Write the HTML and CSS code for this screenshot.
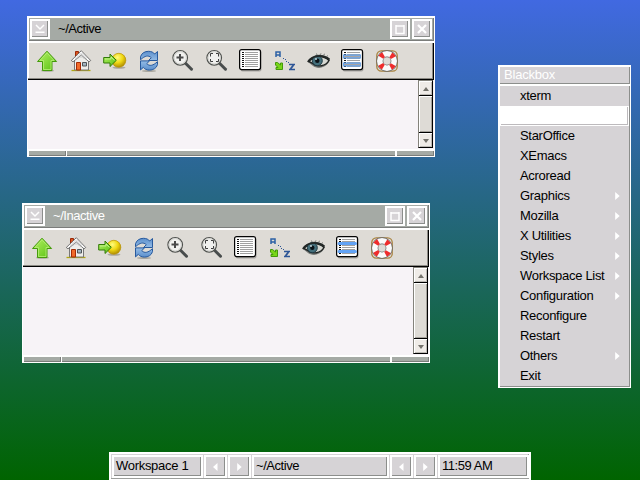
FILE: index.html
```
<!DOCTYPE html>
<html lang="en">
<head>
<meta charset="utf-8">
<title>Blackbox desktop</title>
<link rel="stylesheet" href="styles.css">
</head>
<body>
<svg class="defs" width="0" height="0">
<defs>
<linearGradient id="green" x2="1" y2="1"><stop offset="0" stop-color="#b5f266"/><stop offset="1" stop-color="#58c010"/></linearGradient>
<radialGradient id="gold" cx=".4" cy=".3" r=".75"><stop offset="0" stop-color="#fffb80"/><stop offset=".5" stop-color="#f0d814"/><stop offset="1" stop-color="#a88400"/></radialGradient>
<linearGradient id="blue" x2="0" y2="1"><stop offset="0" stop-color="#5c8fcc"/><stop offset="1" stop-color="#94bce6"/></linearGradient>
<symbol id="i-up" viewBox="0 0 24 24"><ellipse cx="12.5" cy="21.7" rx="6.5" ry="1" fill="#aaa79f"/><path d="M12 2.2 21.6 12.5H17V21.5H7.5V12.5H2.5Z" fill="url(#green)" stroke="#449a0b"/><path d="M12 3.8 19 11.5H16V20.5H8.5V11.5H5Z" fill="none" stroke="#b8ef78" stroke-width=".8"/></symbol>
<symbol id="i-home" viewBox="0 0 24 24"><path d="M2.5 21.5H21.5" stroke="#b2a812" stroke-width="1.3"/><path d="M6.500 2.500H9.500V8L6.500 10Z" fill="#d95520" stroke="#9c2806"/><path d="M5.500 10 12.300 4 19.500 10V21H5.500Z" fill="#eeeeeb" stroke="#777"/><path d="M12.300 1.700 21.700 11.500 20 12.800 12.300 6 4 12.800 2.300 11.500Z" fill="#fafafa" stroke="#555" stroke-width=".8"/><path d="M7 8V11M9 6V10M11 4V9M13 4V9M15 5V10M17 7V11" stroke="#bbb" stroke-width=".7"/><path d="M7.500 13.500H11.500V21H7.500Z" fill="#f06a2a" stroke="#a62c05"/><path d="M13.500 13.500H17.500V17H13.500Z" fill="#a2b4c0" stroke="#4f5558"/></symbol>
<symbol id="i-go" viewBox="0 0 24 24"><ellipse cx="16" cy="18.600" rx="6.500" ry="1.200" fill="#aaa79f"/><circle cx="15.800" cy="11.300" r="7" fill="url(#gold)" stroke="#b99000" stroke-width=".7"/><path d="M.7 8.500H7V5L13.300 11.300 7 17.500V14H.7Z" fill="url(#green)" stroke="#337b09"/><path d="M2 10H8V8L11.300 11.300" fill="none" stroke="#d3f6a6" stroke-width=".7"/></symbol>
<symbol id="i-reload" viewBox="0 0 24 24"><ellipse cx="12" cy="22" rx="7" ry="1" fill="#aaa79f"/><path id="arc" d="M3.500 7.800C4.500 4 8 2.300 11.500 2.300C14.500 2.300 16.500 3.500 17.700 5L20.500 2.500V11.500H11.500L14.300 8.700C11.500 6 8 6.500 3.500 10.800Z" fill="url(#blue)" stroke="#285a9e"/><use href="#arc" transform="rotate(180 12 11.700)"/></symbol>
<symbol id="i-lens" viewBox="0 0 24 24"><path d="M14.500 14.300 20.500 20.200" stroke="#484c4c" stroke-width="3" stroke-linecap="round"/><circle cx="9.200" cy="8.800" r="7.300" fill="#f1f1ef" stroke="#50524f" stroke-width="1.200"/><circle cx="9.200" cy="8.800" r="6.200" fill="none" stroke="#cfcfcb"/></symbol>
<symbol id="i-zoom" viewBox="0 0 24 24"><use href="#i-lens" width="24" height="24"/><path d="M9 5V12M5.500 8.500H12.500" stroke="#4a4a4a" stroke-width="2"/></symbol>
<symbol id="i-fit" viewBox="0 0 24 24"><use href="#i-lens" width="24" height="24"/><path d="M5.500 7.500V4.500H8M11 4.500H13.500V7.500M13.500 10V12.500H11M8 12.500H5.500V10" fill="none" stroke="#3f3f3f"/></symbol>
<symbol id="i-list" viewBox="0 0 24 24"><rect x="1.500" y="1.500" width="21" height="21" rx="2" fill="#aaa8a4"/><rect x=".6" y=".6" width="20.900" height="20" rx="2" fill="#fff" stroke="#050505" stroke-width="1.200"/><path d="M3 3.500H5M3 5.500H5M3 7.500H5M3 9.500H5M3 11.500H5M3 13.500H5M3 15.500H5M3 17.500H5" stroke="#111"/><path d="M6 3.500H19M6 5.500H19M6 7.500H19M6 9.500H19M6 11.500H19M6 13.500H19M6 15.500H19M6 17.500H19" stroke="#a0a0a0"/></symbol>
<symbol id="i-select" viewBox="0 0 24 24"><use href="#i-list" width="24" height="24"/><path d="M3 7.500H19.500M3 15.500H19.500" stroke="#62a3f5" stroke-width="3" stroke-linecap="round"/></symbol>
<symbol id="i-select-dim" viewBox="0 0 24 24"><use href="#i-list" width="24" height="24"/><path d="M2 7.500H20M2 15.500H20" stroke="#65a6f2" stroke-width="4"/><path d="M3 7.500H19.500M3 15.500H19.500" stroke="#aaa4a0" stroke-width="1.500"/></symbol>
<symbol id="i-sort" viewBox="0 0 24 24"><path d="M3 8V3H7V8M3 6H7" fill="none" stroke="#2d61a5" stroke-width="1.500"/><path d="M16 15.500H22M16 20.500H22" stroke="#2d5596" stroke-width="1.400"/><path d="M20.500 16 17.500 20" stroke="#2d5596" stroke-width="1.800"/><path d="M10 9.500h1M12 10.500h1M13 12.500h1M15 13.500h1" stroke="#2d5596"/><path d="M2.500 13.500H4.500L7.500 16V14H9.500V20.500H3V18.500H5L2.500 16Z" fill="#78d618" stroke="#43990b"/></symbol>
<symbol id="i-eye" viewBox="0 0 24 24"><path d="M.8 13C5 4.500 16 3.500 22.500 10C23 13 19 18.500 12 19C7 19 4 15 .8 13Z" fill="#777b78"/><path d="M2 12.500C6 6.500 16 6 22 11.500C19 17 10 19 5 14Z" fill="#d6d8d2" stroke="#202322" stroke-width="1.400"/><circle cx="10.300" cy="11.700" r="5" fill="#446f7b" stroke="#203b45"/><circle cx="10.300" cy="11.700" r="2.200" fill="#0b1318"/><circle cx="9" cy="9.900" r="1" fill="#c4d8df"/><path d="M.8 13C5 6 16 5 22.500 10.500" fill="none" stroke="#222726" stroke-width="1.700"/><path d="M10 6 9.500 4.500M13 6 14 4.300M16 6.500 18 4.800M19 8 21 6.500" stroke="#555a58" stroke-width=".7"/></symbol>
<symbol id="i-help" viewBox="0 0 24 24"><rect x="1.800" y="1.800" width="20.400" height="20.400" rx="4.500" fill="none" stroke="#a98442" stroke-width="1.300"/><circle cx="12" cy="12" r="7.200" fill="none" stroke="#666" stroke-width="7"/><circle cx="12" cy="12" r="7.200" fill="none" stroke="#fafafa" stroke-width="5.600"/><circle cx="12" cy="12" r="7.200" fill="none" stroke="#ef2d2d" stroke-width="5.600" stroke-dasharray="3.800 7.510" stroke-dashoffset="-3.755"/></symbol>
<symbol id="i-min" viewBox="0 0 16 16"><path d="M4 4 8 8 12 4M3.500 11.200H12.500" fill="none" stroke="#fff" stroke-width="1.500"/></symbol>
<symbol id="i-max" viewBox="0 0 16 16"><path d="M3.500 5H12.500M4 4V12.500H12V4" fill="none" stroke="#fff" stroke-width="1.500"/></symbol>
<symbol id="i-close" viewBox="0 0 16 16"><path d="M4 4 12 12M12 4 4 12" stroke="#fff" stroke-width="2.200"/></symbol>
<symbol id="i-left" viewBox="0 0 5 8"><path d="M4.500 0V8L0 4Z" fill="#fff"/></symbol>
<symbol id="i-right" viewBox="0 0 5 8"><path d="M.2 0V8L4.700 4Z" fill="#fff"/></symbol>
</defs>
</svg>
<main class="desktop">
  <section class="window active">
    <header class="titlebar"><span class="wbtn"><svg><use href="#i-min"/></svg></span><span class="title">~/Active</span><span class="wbtn"><svg><use href="#i-max"/></svg></span><span class="wbtn"><svg><use href="#i-close"/></svg></span></header>
    <nav class="tools"><svg><use href="#i-up"/></svg><svg><use href="#i-home"/></svg><svg><use href="#i-go"/></svg><svg><use href="#i-reload"/></svg><svg><use href="#i-zoom"/></svg><svg><use href="#i-fit"/></svg><svg><use href="#i-list"/></svg><svg><use href="#i-sort"/></svg><svg><use href="#i-eye"/></svg><svg><use href="#i-select-dim"/></svg><svg><use href="#i-help"/></svg></nav>
    <div class="content"><div class="scroll"><span class="step up"></span><span class="thumb"></span><span class="step down"></span></div></div>
    <footer class="handle"><span class="grip"></span><span class="bar"></span><span class="grip end"></span></footer>
  </section>
  <section class="window inactive">
    <header class="titlebar"><span class="wbtn"><svg><use href="#i-min"/></svg></span><span class="title">~/Inactive</span><span class="wbtn"><svg><use href="#i-max"/></svg></span><span class="wbtn"><svg><use href="#i-close"/></svg></span></header>
    <nav class="tools"><svg><use href="#i-up"/></svg><svg><use href="#i-home"/></svg><svg><use href="#i-go"/></svg><svg><use href="#i-reload"/></svg><svg><use href="#i-zoom"/></svg><svg><use href="#i-fit"/></svg><svg><use href="#i-list"/></svg><svg><use href="#i-sort"/></svg><svg><use href="#i-eye"/></svg><svg><use href="#i-select"/></svg><svg><use href="#i-help"/></svg></nav>
    <div class="content"><div class="scroll"><span class="step up"></span><span class="thumb"></span><span class="step down"></span></div></div>
    <footer class="handle"><span class="grip"></span><span class="bar"></span><span class="grip end"></span></footer>
  </section>
  <aside class="menu">
    <h1>Blackbox</h1>
    <ul>
      <li>xterm</li>
      <li class="selected"></li>
      <li>StarOffice</li>
      <li>XEmacs</li>
      <li>Acroread</li>
      <li>Graphics<svg><use href="#i-right"/></svg></li>
      <li>Mozilla<svg><use href="#i-right"/></svg></li>
      <li>X Utilities<svg><use href="#i-right"/></svg></li>
      <li>Styles<svg><use href="#i-right"/></svg></li>
      <li>Workspace List<svg><use href="#i-right"/></svg></li>
      <li>Configuration<svg><use href="#i-right"/></svg></li>
      <li>Reconfigure</li>
      <li>Restart</li>
      <li>Others<svg><use href="#i-right"/></svg></li>
      <li>Exit</li>
    </ul>
  </aside>
  <div class="taskbar">
    <span class="cell label">Workspace 1</span>
    <span class="cell"><svg><use href="#i-left"/></svg></span>
    <span class="cell"><svg><use href="#i-right"/></svg></span>
    <span class="cell task">~/Active</span>
    <span class="cell"><svg><use href="#i-left"/></svg></span>
    <span class="cell"><svg><use href="#i-right"/></svg></span>
    <span class="cell label clock">11:59 AM</span>
  </div>
</main>
</body>
</html>
```

FILE: styles.css
```
* { box-sizing: border-box; }
body { margin: 0; font: 13px/16px "Liberation Sans", Arial, sans-serif; letter-spacing: -.3px; color: #000; }
svg { display: block; flex: none; }
.defs { position: absolute; }
.desktop { position: relative; width: 640px; height: 480px; overflow: hidden; background: linear-gradient(#4169e1, #006400); }

.window { position: absolute; width: 408px; display: flex; flex-direction: column; background: #fff; padding: 2px 1px 1px; }
.active { left: 27px; top: 16px; height: 141px; }
.inactive { left: 22px; top: 203px; height: 160px; }
.titlebar { display: flex; align-items: center; height: 23px; margin: 0 0 2px 1px; padding: 0 2px 0 1px; gap: 2px; background: #a5aaa5; border: solid #7b7d7b; border-width: 0 1px 1px 0; }
.title { flex: 1; padding: 0 0 1px 6px; white-space: nowrap; letter-spacing: -.45px; }
.inactive .title { color: #fff; }
.titlebar .wbtn:last-child { margin-right: -1px; }
.wbtn { width: 20px; height: 20px; border: 2px solid #fff; background: #d6d3d6; box-shadow: inset -1px -1px #8c8e8c; }
.wbtn svg { width: 16px; height: 16px; }
.tools { display: flex; flex: none; gap: 10px; height: 37px; padding: 6px 0 0 7px; background: #dedbd6; border: solid #000; border-width: 0 1px 1px 0; box-shadow: inset -1px -1px #8c8a84, inset 1px 0 #fff; }
.tools svg { width: 24px; height: 24px; }
.content { flex: 1; display: flex; justify-content: flex-end; padding: 0 1px 1px 0; background: #f7f3f7; }
.scroll { display: flex; flex-direction: column; width: 15px; background: #dedbd6; border: solid #000; border-width: 0 1px 1px 0; border-left: 1px solid #84827b; border-top: 1px solid #84827b; }
.step { display: flex; align-items: center; justify-content: center; height: 14px; background: #efebe7; border: solid #fff; border-width: 1px 0 0 1px; box-shadow: inset -1px -1px #bdbab5; }
.step::before { content: ""; border: 3.5px solid transparent; }
.up::before { border-top: 0; border-bottom: 4px solid #73716b; }
.down::before { border-bottom: 0; border-top: 4px solid #73716b; }
.thumb { flex: 1; border-top: 1px solid #000; border-bottom: 1px solid #000; background: #dedbd6; box-shadow: inset 1px 1px #fff, inset -1px -1px #a5a29c; }
.handle { display: flex; flex: none; gap: 1px; height: 7px; padding: 2px 0 0 1px; }
.handle span { background: #a5aaa5; border-bottom: 1px solid #7b7d7b; }
.grip { width: 37px; border-right: 1px solid #7b7d7b; }
.bar { flex: 1; margin-right: 1px; }

.menu { position: absolute; left: 498px; top: 65px; width: 133px; height: 323px; background: #fff; padding: 2px 1px 1px 2px; }
.menu h1 { margin: 0 0 2px; height: 17px; padding-left: 4px; color: #fff; background: #d6d3d6; border: solid #8c8e8c; border-width: 0 1px 1px 0; font: inherit; line-height: 15px; letter-spacing: -.2px; }
.menu ul { margin: 0; padding: 0; list-style: none; height: 301px; background: #d6d3d6; border: solid #8c8e8c; border-width: 0 1px 1px 0; }
.menu li { display: flex; align-items: center; justify-content: space-between; height: 20px; padding: 0 9px 1px 20px; white-space: nowrap; }
.menu li svg { width: 5px; height: 8px; }
.menu li.selected { background: #fff; border: 1px solid #fff; box-shadow: inset -1px -1px #bdbabd; }

.taskbar { position: absolute; left: 109px; top: 452px; width: 422px; height: 28px; display: flex; gap: 1px; padding: 1px 0 1px 1px; background: #d6d3d6; border: 2px solid #fff; border-bottom-width: 1px; box-shadow: inset 0 -1px #9c9e9c, inset -1px 0 #9c9e9c; }
.cell { display: flex; align-items: center; justify-content: center; width: 23px; height: 23px; background: #d6d3d6; border: 2px solid #fff; box-shadow: inset -1px -1px #8c8e8c; white-space: nowrap; }
.cell svg { width: 5px; height: 8px; }
.label, .task { justify-content: flex-start; padding: 0 0 1px 2px; width: 91px; }
.task { width: 137px; letter-spacing: -.45px; }
.clock { letter-spacing: -.45px; }
```
